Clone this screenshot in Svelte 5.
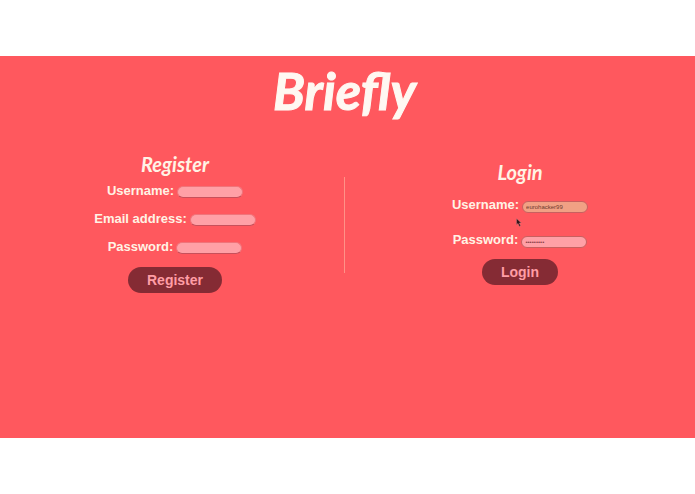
<script>
  let registration = $state({ username: '', email: '', password: '' });
  let credentials = $state({ username: 'eurohacker99', password: 'password1' });

  function submit(event) {
    event.preventDefault();
  }
</script>

<main>
  <h1>Briefly</h1>
  <div class="forms">
    <form class="register" onsubmit={submit}>
      <h2>Register</h2>
      <div class="row">
        <label for="register-username">Username:</label>
        <input id="register-username" type="text" bind:value={registration.username} />
      </div>
      <div class="row">
        <label for="register-email">Email address:</label>
        <input id="register-email" type="email" bind:value={registration.email} />
      </div>
      <div class="row">
        <label for="register-password">Password:</label>
        <input id="register-password" type="password" bind:value={registration.password} />
      </div>
      <button type="submit">Register</button>
    </form>

    <div class="divider"></div>

    <form class="login" onsubmit={submit}>
      <h2>Login</h2>
      <div class="row">
        <label for="login-username">Username:</label>
        <input id="login-username" class="filled" type="text" bind:value={credentials.username} />
        <svg class="pointer" viewBox="0 0 6 9" aria-hidden="true">
          <path d="M.5.5v6.2l1.5-1.3 1.3 3 1.3-.6-1.3-2.8h2z" />
        </svg>
      </div>
      <div class="row">
        <label for="login-password">Password:</label>
        <input id="login-password" type="password" bind:value={credentials.password} />
      </div>
      <button type="submit">Login</button>
    </form>
  </div>
</main>

<style>
  :global(body) {
    background: #fff;
  }

  main {
    box-sizing: border-box;
    min-height: 382px;
    margin-top: 56px;
    background: #ff585e;
    color: #fff3e5;
    font-family: "Liberation Sans", Arial, sans-serif;
  }

  h1,
  h2 {
    margin: 0;
    font-family: Lato, sans-serif;
    font-style: italic;
    text-align: center;
  }

  h1 {
    padding-right: 6px;
    color: #fff8f2;
    font-size: 52px;
    line-height: 68px;
    font-weight: 700;
    -webkit-text-stroke: 1px #fff8f2;
  }

  h2 {
    margin-bottom: 2px;
    font-size: 20px;
    line-height: 24px;
    font-weight: 700;
  }

  .forms {
    display: grid;
    grid-template-columns: 344fr 1px 350fr;
    padding-top: 28px;
  }

  form {
    display: flex;
    flex-direction: column;
    align-items: center;
  }

  .register {
    padding-left: 6px;
  }

  .login {
    padding-top: 8px;
  }

  .row {
    position: relative;
    display: flex;
    align-items: center;
    gap: 3px;
    height: 28px;
  }

  .login .row {
    height: 35px;
  }

  .login h2 {
    margin-bottom: 5px;
  }

  label {
    font-size: 13px;
    line-height: 16px;
    font-weight: 700;
    padding-bottom: 3px;
  }

  input {
    box-sizing: border-box;
    width: 66px;
    height: 12px;
    padding: 0 3px;
    border: 1px solid #f0747a;
    border-bottom-color: #c8505a;
    border-radius: 6px;
    background: #ffa0a6;
    color: #8a3f48;
    font-family: inherit;
    font-size: 6px;
    line-height: 10px;
    outline: none;
  }

  .login input {
    border-color: #c8605f;
  }

  .login .filled {
    background: #f1a184;
    color: #6f3b2f;
  }

  button {
    height: 26px;
    margin-top: 5px;
    padding: 0 19px;
    border: 0;
    border-radius: 13px;
    background: #852b34;
    color: #ff9da5;
    font-family: inherit;
    font-size: 14px;
    line-height: 26px;
    font-weight: 700;
  }

  .login button {
    margin-top: 0;
  }

  .divider {
    height: 96px;
    margin-top: 25px;
    background: #ff9287;
  }

  .pointer {
    position: absolute;
    top: 29px;
    left: 64px;
    width: 6px;
    height: 9px;
    fill: #33151a;
    stroke: #d8868a;
    stroke-width: 0.4;
  }
</style>
